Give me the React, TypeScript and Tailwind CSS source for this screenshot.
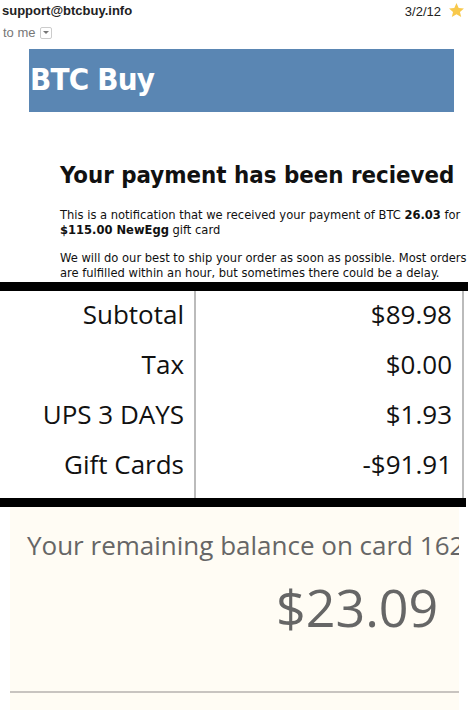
import React from "react";

export default function App() {
  const rows = [
    ["Subtotal", "$89.98"],
    ["Tax", "$0.00"],
    ["UPS 3 DAYS", "$1.93"],
    ["Gift Cards", "-$91.91"],
  ];
  return (
    <div className="w-[468px] h-[710px] bg-white overflow-hidden relative">
      {/* Gmail header */}
      <div className="h-[49px] relative font-['Liberation_Sans',Arial,sans-serif]">
        <div className="absolute left-[2px] top-[1px] text-[13px] font-bold text-[#222]">support@btcbuy.info</div>
        <div className="absolute left-[3px] top-[23px] text-[13px] text-[#777] flex items-center gap-[4px]">
          <span>to me</span>
          <span className="w-[12px] h-[12px] border border-[#ccc] rounded-[2px] flex items-center justify-center">
            <svg width="6" height="4" viewBox="0 0 6 4"><path d="M0 0h6L3 3z" fill="#777" /></svg>
          </span>
        </div>
        <div className="absolute right-[27px] top-[2px] text-[13px] text-[#222]">3/2/12</div>
        <svg className="absolute left-[448px] top-[2px]" width="17" height="17" viewBox="0 0 24 24">
          <path d="M12 1.5l3.1 7 7.4.6-5.6 4.9 1.7 7.3L12 17.4l-6.6 3.9 1.7-7.3L1.5 9.1l7.4-.6z" fill="#f8c94c" />
        </svg>
      </div>
      {/* Banner */}
      <div className="ml-[29px] w-[425px] h-[63px] bg-[#5a86b3] flex items-center">
        <span className="pl-[1px] pb-[3px] text-white text-[31px] tracking-[-0.8px] font-bold font-['DejaVu_Sans_Condensed','DejaVu_Sans',sans-serif] leading-none">BTC Buy</span>
      </div>
      {/* Body */}
      <div className="pl-[60px] font-['DejaVu_Sans_Condensed','DejaVu_Sans',sans-serif] text-[#111]">
        <div className="pt-[47px] text-[23.8px] font-bold leading-[32px] whitespace-nowrap">Your payment has been recieved</div>
        <p className="mt-[16px] text-[12.8px] leading-[15px] whitespace-nowrap">
          This is a notification that we received your payment of BTC <b>26.03</b> for
          <br />
          <b>$115.00 NewEgg</b> gift card
        </p>
        <p className="mt-[13px] text-[12.8px] leading-[15px] whitespace-nowrap">
          We will do our best to ship your order as soon as possible. Most orders
          <br />
          are fulfilled within an hour, but sometimes there could be a delay.
        </p>
      </div>
      <div className="absolute left-0 top-[282px] w-[468px]">
        <div className="h-[9px] bg-black" />
        <div className="flex font-['Open_Sans',sans-serif] text-[#111] text-[26px]">
          <div className="w-[196px] border-r-2 border-[#bbb] pr-[10px] pb-[7px]">
            {rows.map(([l]) => (
              <div key={l} className="h-[50px] pb-[4px] flex items-center justify-end">{l}</div>
            ))}
          </div>
          <div className="w-[268px] border-r-2 border-[#bbb] pr-[10px] pb-[7px]">
            {rows.map(([l, v]) => (
              <div key={l} className="h-[50px] pb-[4px] flex items-center justify-end">{v}</div>
            ))}
          </div>
        </div>
        <div className="h-[9px] bg-black w-[466px]" />
        <div className="ml-[10px] w-[449px] h-[203px] bg-[#fffcf4] overflow-hidden font-['Open_Sans',sans-serif] text-[#666]">
          <div className="pl-[17px] pt-[20px] text-[26px] whitespace-nowrap leading-[36px]">Your remaining balance on card 1629</div>
          <div className="mt-[16px] pl-[266px] text-[52px] leading-[56px]">$23.09</div>
          <div className="mt-[56px] h-[2px] bg-[#c8c4c0]" />
        </div>
      </div>
    </div>
  );
}
